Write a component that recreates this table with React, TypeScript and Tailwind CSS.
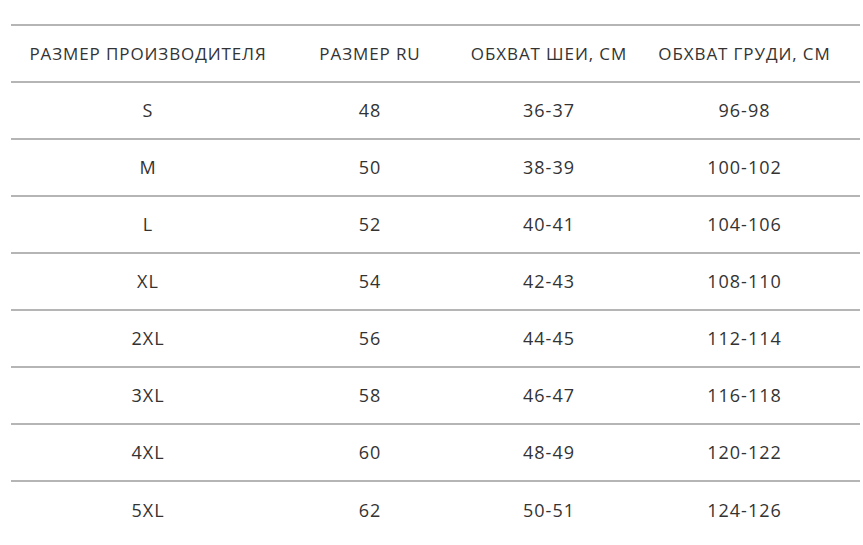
import React from "react";

const rows = [
  ["S", "48", "36-37", "96-98"],
  ["M", "50", "38-39", "100-102"],
  ["L", "52", "40-41", "104-106"],
  ["XL", "54", "42-43", "108-110"],
  ["2XL", "56", "44-45", "112-114"],
  ["3XL", "58", "46-47", "116-118"],
  ["4XL", "60", "48-49", "120-122"],
  ["5XL", "62", "50-51", "124-126"],
];

const headers = ["РАЗМЕР ПРОИЗВОДИТЕЛЯ", "РАЗМЕР RU", "ОБХВАТ ШЕИ, СМ", "ОБХВАТ ГРУДИ, СМ"];

export default function App() {
  return (
    <div className="w-[863px] h-[545px] bg-white pt-6 pl-[11px] overflow-hidden font-['Open_Sans',sans-serif] text-[#333]">
      <table className="w-[849px] border-collapse table-fixed">
        <colgroup>
          <col className="w-[274px]" />
          <col className="w-[170px]" />
          <col className="w-[188px]" />
          <col className="w-[217px]" />
        </colgroup>
        <thead>
          <tr className="h-[57px] border-t-2 border-[#b5b5b5]">
            {headers.map((h, i) => (
              <th
                key={h}
                className={`font-normal text-[17px] text-center p-0 tracking-[0.9px] whitespace-nowrap ${i === 3 ? "pr-[14px]" : ""}`}
              >
                {h}
              </th>
            ))}
          </tr>
        </thead>
        <tbody>
          {rows.map((r) => (
            <tr key={r[0]} className="h-[57px] border-t-2 border-[#b5b5b5]">
              {r.map((c, i) => (
                <td
                  key={i}
                  className={`text-center text-[18px] p-0 tracking-[1px] ${i === 3 ? "pr-[14px]" : ""}`}
                >
                  {c}
                </td>
              ))}
            </tr>
          ))}
        </tbody>
      </table>
    </div>
  );
}
